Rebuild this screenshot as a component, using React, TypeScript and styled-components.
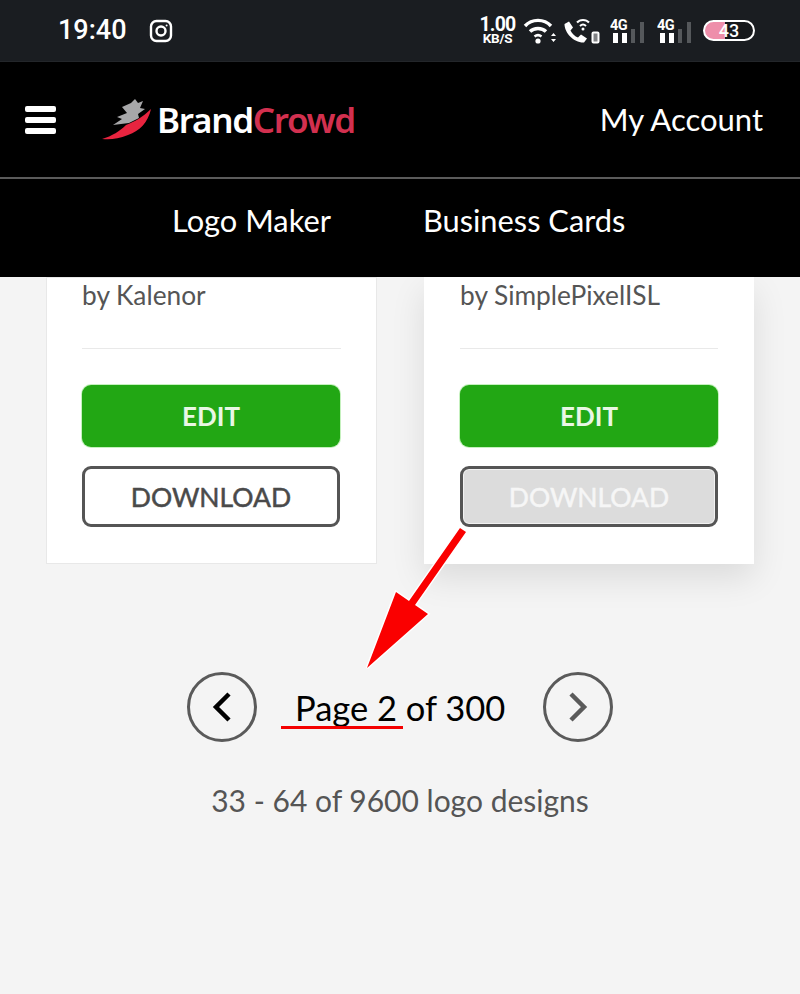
import React from "react";
import styled, { createGlobalStyle } from "styled-components";

const Global = createGlobalStyle`
  html, body { margin: 0; padding: 0; background: #f4f4f4; }
  * { box-sizing: border-box; }
`;

const Page = styled.div`
  position: relative;
  width: 800px;
  height: 994px;
  overflow: hidden;
  background: #f4f4f4;
  font-family: Lato, "Liberation Sans", sans-serif;
`;

const StatusBar = styled.div`
  height: 62px;
  background: #1a1d21;
  border-bottom: 1px solid #23262a;
  padding: 0 45px 0 58px;
  display: flex;
  align-items: center;
  justify-content: space-between;
  color: #fff;
`;
const StatusLeft = styled.div`
  display: flex;
  align-items: center;
  gap: 22px;
`;
const Clock = styled.span`
  font: 500 27px Roboto, sans-serif;
  line-height: 1;
`;
const StatusRight = styled.div`
  display: flex;
  align-items: center;
`;
const Speed = styled.div`
  display: flex;
  flex-direction: column;
  align-items: center;
  width: 35px;
  margin-right: 8px;
  font-family: Roboto, sans-serif;
  font-weight: 700;
`;
const SpeedValue = styled.span`
  font-size: 19.5px;
  line-height: 16px;
  letter-spacing: -0.8px;
  white-space: nowrap;
`;
const SpeedUnit = styled.span`
  font-size: 13.5px;
  line-height: 11px;
  letter-spacing: -0.3px;
  white-space: nowrap;
`;
const Icon = styled.svg<{ $mr?: number }>`
  display: block;
  flex: none;
  margin-right: ${(p) => p.$mr ?? 0}px;
`;
const Battery = styled.div`
  width: 52px;
  height: 21px;
  border: 2.5px solid #fff;
  border-radius: 11px;
  overflow: hidden;
  display: flex;
  align-items: center;
  justify-content: center;
  font: 500 18px/1 Roboto, sans-serif;
  color: #fff;
  background: linear-gradient(90deg, #ee8eaa 0 42%, #17191c 42%);
`;

const Header = styled.header`
  background: #000;
  color: #fff;
  height: 215px;
`;
const TopRow = styled.div`
  height: 117px;
  border-bottom: 2px solid #5b5b5b;
  padding: 0 37px 0 25px;
  display: flex;
  align-items: center;
`;
const Burger = styled.div`
  display: flex;
  flex-direction: column;
  gap: 5px;
  width: 31px;
  margin-right: 46px;
  i {
    display: block;
    height: 6px;
    border-radius: 2px;
    background: #fff;
  }
`;
const Brand = styled.div`
  margin-left: 5px;
  font: 600 35px/1 "Noto Sans", sans-serif;
  letter-spacing: -1.3px;
  span {
    color: #d2304f;
  }
`;
const Account = styled.a`
  margin-left: auto;
  font-size: 31px;
  line-height: 1;
  color: #fff;
`;
const NavRow = styled.nav`
  height: 98px;
  padding: 0 0 16px 172px;
  display: flex;
  align-items: center;
  gap: 92px;
  font-size: 30.8px;
`;

const Main = styled.main`
  height: 717px;
  padding: 0 46px;
  overflow: hidden;
`;
const Cards = styled.div`
  display: grid;
  grid-template-columns: 331px 330px;
  gap: 47px;
`;
const Card = styled.article<{ $raised?: boolean }>`
  height: 287px;
  background: #fff;
  padding: 0 36px;
  box-shadow: ${(p) =>
    p.$raised ? "0 14px 32px rgba(0,0,0,.1)" : "inset 0 0 0 1px #e8e8e8"};
`;
const Author = styled.div`
  font-size: 26.3px;
  line-height: 36px;
  color: #555;
`;
const Rule = styled.hr`
  margin: 35px 0 36px;
  border: 0;
  border-top: 1px solid #e9e9e9;
`;
const EditButton = styled.button`
  display: block;
  width: 258px;
  height: 62px;
  border: 0;
  border-radius: 9px;
  background: #22a714;
  box-shadow: 0 0 0 1px rgba(90, 215, 70, 0.35);
  color: #e9f7e5;
  font: 700 26px Lato, sans-serif;
`;
const DownloadButton = styled.button<{ $hover?: boolean }>`
  display: block;
  width: 258px;
  height: 61px;
  margin-top: 19px;
  border: 3px solid #555;
  border-radius: 9px;
  background: ${(p) => (p.$hover ? "#dcdcdc" : "#fff")};
  box-shadow: ${(p) => (p.$hover ? "inset 0 0 0 1px #f2f2f2" : "none")};
  color: ${(p) => (p.$hover ? "#f6f6f6" : "#4a4a4a")};
  font: 400 26.5px Lato, sans-serif;
  -webkit-text-stroke: 0.5px currentColor;
`;

const Pager = styled.div`
  margin-top: 108px;
  margin-left: 141px;
  display: flex;
  align-items: center;
  color: #000;
  font-size: 34.5px;
`;
const PagerButton = styled.button<{ $soft?: boolean }>`
  width: 70px;
  height: 70px;
  padding: 0;
  border: 3px solid #5a5a5a;
  border-radius: 50%;
  background: transparent;
  display: flex;
  align-items: center;
  justify-content: center;
  color: ${(p) => (p.$soft ? "#5a5a5a" : "#000")};
`;
const PageLabel = styled.span`
  margin: 0 38px;
  white-space: nowrap;
`;
const Count = styled.div`
  margin-top: 40px;
  text-align: center;
  margin-left: -46px;
  margin-right: -46px;
  color: #555;
  font-size: 30px;
  line-height: 36px;
`;
const Annotation = styled.svg`
  position: absolute;
  left: 0;
  top: 0;
  pointer-events: none;
`;

function Signal() {
  return (
    <>
      <text x="0" y="12" fill="#fff" fontFamily="Roboto, sans-serif" fontWeight="700" fontSize="14.500" letterSpacing="-0.5">
        4G
      </text>
      <rect x="3" y="15" width="5" height="10" fill="#fff" />
      <rect x="12" y="15" width="5" height="10" fill="#fff" />
      <rect x="21" y="11" width="4" height="14" fill="#55585b" />
      <rect x="30" y="4" width="4" height="21" fill="#55585b" />
    </>
  );
}

export default function App() {
  return (
    <Page>
      <Global />
      <StatusBar>
        <StatusLeft>
          <Clock>19:40</Clock>
          <Icon width="24" height="24" viewBox="0 0 24 24" fill="none" stroke="#fff" strokeWidth="2.4">
            <rect x="2" y="2" width="20" height="20" rx="5.5" />
            <circle cx="12" cy="12" r="4.5" />
            <circle cx="17.6" cy="6.4" r="1" fill="#fff" stroke="none" />
          </Icon>
        </StatusLeft>
        <StatusRight>
          <Speed>
            <SpeedValue>1.00</SpeedValue>
            <SpeedUnit>KB/S</SpeedUnit>
          </Speed>
          <Icon $mr={7} width="34" height="26" viewBox="0 0 34 26" fill="none" stroke="#fff" strokeWidth="3.4">
            <path d="M2 8 C9 0.500 21 0.500 28 8" />
            <path d="M7 13.500 C11 9.500 19 9.500 23 13.500" />
            <path d="M11.500 18.500 C13.500 17 16.500 17 18.500 18.500" strokeWidth="2.600" />
            <circle cx="15" cy="23" r="2.600" fill="#fff" stroke="none" />
            <path d="M28 18 l2.500 -3 l2.500 3z M28 21 l2.500 3 l2.500 -3z" fill="#fff" stroke="none" />
          </Icon>
          <Icon $mr={10} width="36" height="26" viewBox="0 0 36 26" fill="none">
            <path
              d="M0.500 6 L5 3.500 L9 9.500 L6.500 12.500 C8 15.500 11 18.500 14 19.500 L17 16.500 L23 20.500 L20 24.500 C10 25 0.500 15 0.500 6z"
              fill="#fff"
            />
            <path d="M13 4.500 C16 1 22 1 25 4.500 M16 8 C18 6 20 6 22 8" stroke="#fff" strokeWidth="2" />
            <circle cx="19" cy="11" r="1.500" fill="#fff" />
            <rect x="28.500" y="14.500" width="6" height="10" rx="1" stroke="#fff" strokeWidth="2" fill="#fff" fillOpacity="0.45" />
          </Icon>
          <Icon $mr={12} width="35" height="26" viewBox="0 0 35 26">
            <Signal />
          </Icon>
          <Icon $mr={11} width="35" height="26" viewBox="0 0 35 26">
            <Signal />
          </Icon>
          <Battery>43</Battery>
        </StatusRight>
      </StatusBar>

      <Header>
        <TopRow>
          <Burger>
            <i />
            <i />
            <i />
          </Burger>
          <Icon width="50" height="44" viewBox="0 0 50 44">
            <path d="M0 41 C10 38 18 33 24 27 C32 24 41 19 49 11 C46 24 38 33 26 37 C16 41 8 42 0 41z" fill="#e8243f" />
            <path
              d="M20 9 L29 5 L33 1 L36 5 L41 3 L38 10 L43 11 L36 16 L37 20 L27 25 L11 27 L20 21 L15 19 L25 15z"
              fill="#a7a7a9"
            />
          </Icon>
          <Brand>
            Brand<span>Crowd</span>
          </Brand>
          <Account>My Account</Account>
        </TopRow>
        <NavRow>
          <span>Logo Maker</span>
          <span>Business Cards</span>
        </NavRow>
      </Header>

      <Main>
        <Cards>
          <Card>
            <Author>by Kalenor</Author>
            <Rule />
            <EditButton>EDIT</EditButton>
            <DownloadButton>DOWNLOAD</DownloadButton>
          </Card>
          <Card $raised>
            <Author>by SimplePixelISL</Author>
            <Rule />
            <EditButton>EDIT</EditButton>
            <DownloadButton $hover>DOWNLOAD</DownloadButton>
          </Card>
        </Cards>
        <Pager>
          <PagerButton aria-label="Previous">
            <svg width="24" height="34" viewBox="0 0 24 34" fill="none" stroke="currentColor" strokeWidth="4.500">
              <path d="M19 4 L6 17 L19 30" />
            </svg>
          </PagerButton>
          <PageLabel>Page 2 of 300</PageLabel>
          <PagerButton $soft aria-label="Next">
            <svg width="24" height="34" viewBox="0 0 24 34" fill="none" stroke="currentColor" strokeWidth="4.500">
              <path d="M5 4 L18 17 L5 30" />
            </svg>
          </PagerButton>
        </Pager>
        <Count>33 - 64 of 9600 logo designs</Count>
      </Main>

      <Annotation width="800" height="994" viewBox="0 0 800 994">
        <path
          d="M460 528 L466 532 L415 605 L428 614 L367 668 L396 592 L409 601z"
          fill="#fa0000"
          stroke="#fff"
          strokeWidth="3"
          paintOrder="stroke"
        />
        <rect x="281" y="726" width="122" height="3" fill="#f40000" />
      </Annotation>
    </Page>
  );
}
